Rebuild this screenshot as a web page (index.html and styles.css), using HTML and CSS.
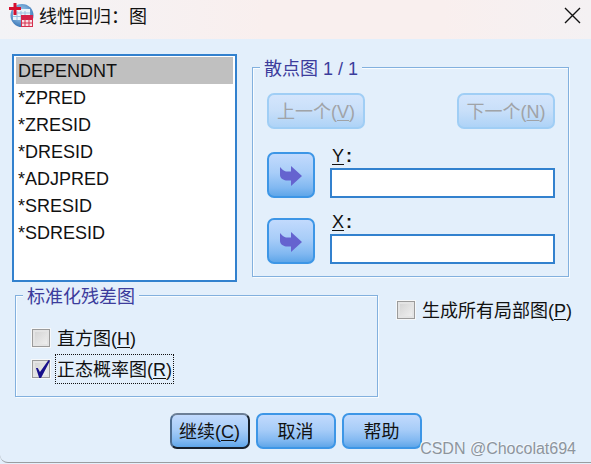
FILE: index.html
```html
<!DOCTYPE html>
<html lang="zh-CN">
<head>
<meta charset="utf-8">
<meta name="viewport" content="width=device-width, initial-scale=1">
<title>线性回归：图</title>
<link rel="stylesheet" href="styles.css">
</head>
<body>
<div class="dialog">
  <header class="titlebar">
    <svg class="app-icon" width="26" height="26" viewBox="0 0 26 26" aria-hidden="true">
      <defs>
        <radialGradient id="globe" cx="45%" cy="40%" r="60%">
          <stop offset="0" stop-color="#b4d2ec"/>
          <stop offset="0.6" stop-color="#6fa3d4"/>
          <stop offset="1" stop-color="#3a76b6"/>
        </radialGradient>
      </defs>
      <circle cx="13" cy="12.500" r="11.500" fill="url(#globe)"/>
      <rect x="4" y="6" width="17" height="11" fill="#eaf3fb"/>
      <path d="M4 10h17M4 13.500h17M8 8v9M12 8v9M16 8v9" stroke="#9bbfe0" fill="none"/>
      <rect x="13" y="12" width="11" height="12" fill="#f9e3e8"/>
      <rect x="12" y="12" width="12" height="5" fill="#d3224a"/>
      <path d="M12 20h12M12 23.500h12M12.500 16v8M16 16v8M20 16v8M23.500 16v8" stroke="#d5304f" fill="none"/>
      <path d="M6 0v12M0 5.500h12" stroke="#d60f2f" stroke-width="3" fill="none"/>
    </svg>
    <h1 class="title">线性回归：图</h1>
    <button class="close" type="button" aria-label="关闭">
      <svg width="17" height="17" viewBox="0 0 17 17"><path d="M1 1l15 15M16 1L1 16" stroke="#111" stroke-width="1.400" fill="none"/></svg>
    </button>
  </header>

  <form class="content">
    <div class="top-row">
      <select class="variables" size="7" aria-label="变量">
        <option selected>DEPENDNT</option>
        <option>*ZPRED</option>
        <option>*ZRESID</option>
        <option>*DRESID</option>
        <option>*ADJPRED</option>
        <option>*SRESID</option>
        <option>*SDRESID</option>
      </select>

      <fieldset class="group">
        <legend>散点图 1 / 1</legend>
        <div class="scatter-body">
          <div class="pager">
            <button class="btn pager-btn" type="button" disabled>上一个(<u>V</u>)</button>
            <button class="btn pager-btn" type="button" disabled>下一个(<u>N</u>)</button>
          </div>
          <div class="axis">
            <button class="btn move" type="button" aria-label="移至 Y">
              <svg width="22" height="20" viewBox="0 0 22 20"><path d="M0 1C2 3 3 5 6 5.500H11V0L22 10L11 20V14.500H6C3 14 0 12 0 9Z" fill="#6563cf"/></svg>
            </button>
            <div class="axis-field">
              <label for="y-axis"><u>Y</u><b>:</b></label>
              <input id="y-axis" type="text">
            </div>
          </div>
          <div class="axis">
            <button class="btn move" type="button" aria-label="移至 X">
              <svg width="22" height="20" viewBox="0 0 22 20"><path d="M0 1C2 3 3 5 6 5.500H11V0L22 10L11 20V14.500H6C3 14 0 12 0 9Z" fill="#6563cf"/></svg>
            </button>
            <div class="axis-field">
              <label for="x-axis"><u>X</u><b>:</b></label>
              <input id="x-axis" type="text">
            </div>
          </div>
        </div>
      </fieldset>
    </div>

    <div class="bottom-row">
      <fieldset class="group residual">
        <legend>标准化残差图</legend>
        <div class="residual-body">
          <div class="check">
            <input id="histogram" type="checkbox">
            <label for="histogram">直方图(<u>H</u>)</label>
          </div>
          <div class="check">
            <input id="normal" type="checkbox" checked>
            <label class="focused" for="normal">正态概率图(<u>R</u>)</label>
          </div>
        </div>
      </fieldset>
      <div class="check partial">
        <input id="partial" type="checkbox">
        <label for="partial">生成所有局部图(<u>P</u>)</label>
      </div>
    </div>

    <div class="actions">
      <button class="btn action default" type="button">继续(<u>C</u>)</button>
      <button class="btn action" type="button">取消</button>
      <button class="btn action" type="button">帮助</button>
    </div>
  </form>
  <span class="watermark">CSDN @Chocolat694</span>
</div>
</body>
</html>
```

FILE: styles.css
```css
* {
  box-sizing: border-box;
}

body {
  margin: 0;
  background: #e3effb;
}

body,
button,
input,
select {
  font-family: "Liberation Sans", "Noto Sans CJK SC", sans-serif;
  font-size: 18px;
  line-height: 20px;
  color: #111;
}

u {
  text-decoration-thickness: 1px;
  text-underline-offset: 2px;
}

.dialog {
  position: relative;
  background: #e3effb;
  border-bottom: 1px solid #9a9da0;
  border-bottom-left-radius: 8px;
}

.titlebar {
  display: flex;
  align-items: center;
  gap: 4px;
  height: 39px;
  padding: 0 10px 8px 9px;
  background: linear-gradient(90deg, #f3f3f6, #f9efee 45%, #f9efee 75%, #f4f1f3);
}

.app-icon {
  flex: none;
}

.title {
  flex: 1;
  margin: 0;
  padding-top: 2px;
  font-size: 18px;
  font-weight: 400;
}

.close {
  display: flex;
  padding: 0;
  border: 0;
  background: none;
}

.content {
  padding: 15px 0 13px;
}

.top-row {
  display: grid;
  grid-template-columns: minmax(0, 225fr) minmax(0, 317fr);
  align-items: start;
  gap: 15px;
  padding: 0 22px 0 12px;
}

.variables {
  width: 100%;
  height: 228px;
  padding: 1px 2px;
  border: 2px solid #3281ce;
  border-radius: 0;
  background: #fff;
  outline: 0;
  overflow: hidden;
}

.variables option {
  height: 27px;
  padding: 4px 2px 3px;
  color: #111;
}

.variables option:checked {
  background: #c0c0c0 linear-gradient(#c0c0c0, #c0c0c0);
}

.group {
  min-width: 0;
  margin: 3px 0 0;
  padding: 0;
  border: 1px solid #82b0de;
  box-shadow: inset 1px 1px 0 #f8fcff, 1px 1px 0 #f8fcff;
}

.group legend {
  height: 20px;
  margin-left: 7px;
  padding: 0 4px;
  background: #e3effb;
  color: #3c3c9c;
  line-height: 24px;
}

.scatter-body {
  padding: 16px 13px 12px 14px;
}

.pager {
  display: flex;
  justify-content: space-between;
  margin-bottom: 19px;
}

.btn {
  padding: 2px 0 0;
  border: 2px solid #3d96e6;
  border-radius: 7px;
  background: linear-gradient(#c2dafd, #a8cdf8 45%, #81b8f1 80%, #5fa6e9);
  white-space: nowrap;
}

.btn:disabled {
  border-color: #a0cef5;
  background: linear-gradient(#d4e5fc, #c8dff9 50%, #aed3f7);
  color: #a0a3a7;
}

.pager-btn {
  width: 98px;
  height: 36px;
}

.axis {
  display: flex;
  align-items: flex-end;
  gap: 15px;
}

.axis + .axis {
  margin-top: 16px;
}

.move {
  display: flex;
  align-items: center;
  justify-content: center;
  width: 48px;
  height: 46px;
}

.axis-field {
  flex: 1;
  min-width: 0;
}

.axis-field label {
  display: block;
  padding: 0 0 4px 2px;
  line-height: 16px;
}

.axis-field b {
  padding-left: 2px;
}

.axis-field input {
  display: block;
  width: 100%;
  height: 30px;
  padding: 0 4px;
  border: 2px solid #3281ce;
  background: #fff;
}

.bottom-row {
  display: flex;
  align-items: flex-start;
  gap: 18px;
  padding: 0 17px 0 15px;
}

.residual {
  flex: 1;
}

.residual-body {
  padding: 18px 15px 12px;
}

.check {
  display: flex;
  align-items: center;
  gap: 4px;
  height: 30px;
  white-space: nowrap;
}

.check + .check {
  margin-top: 1px;
}

.check label {
  padding: 5px 1px 3px;
  border: 1px solid transparent;
}

.check .focused {
  border: 1px dotted #111;
}

.check input {
  flex: none;
  appearance: none;
  width: 20px;
  height: 20px;
  margin: 0;
  border: 1px solid #f6f8fa;
  background: linear-gradient(135deg, #cfcfcf, #f4f4f4);
  box-shadow: inset 0 0 0 1px #9b9b9b, inset 0 0 0 3px #e4e4e4;
}

.check input:checked {
  display: grid;
}

.check input:checked::before {
  content: "";
  width: 18px;
  height: 18px;
  background: #18108c;
  clip-path: polygon(22% 44%, 32% 44%, 44% 66%, 92% 0, 100% 4%, 50% 100%, 40% 100%);
}

.partial {
  margin-top: 13px;
}

.actions {
  display: flex;
  justify-content: center;
  gap: 6px;
  padding-top: 16px;
}

.action {
  width: 80px;
  height: 36px;
}

.default {
  border-color: #6d7f96 #17202c #17202c #4d6c90;
}

.watermark {
  position: absolute;
  right: 15px;
  bottom: 3px;
  font-size: 16px;
  color: #8d959d;
  text-shadow: -1px -1px 0 #f5f9fd;
}
```
